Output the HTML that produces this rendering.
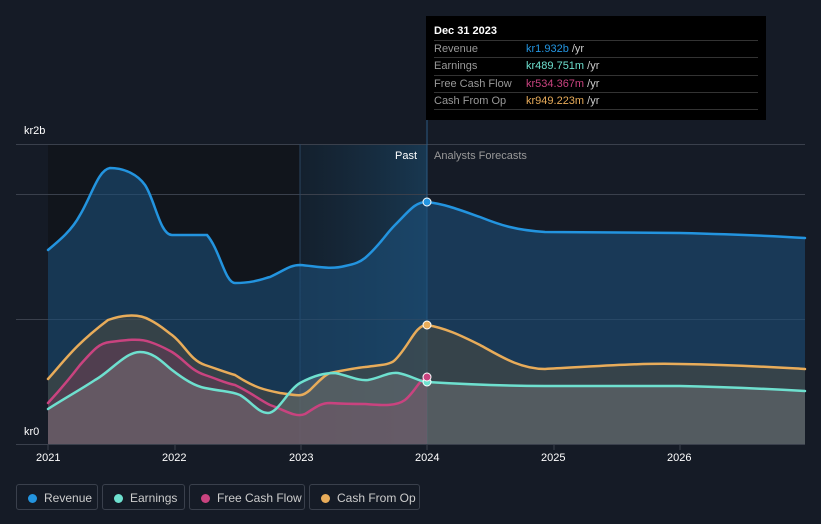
<!DOCTYPE html><html><head><style>
body{margin:0;width:821px;height:524px;background:#151b26;font-family:"Liberation Sans",sans-serif;overflow:hidden;position:relative}
.tt{position:absolute;left:426px;top:16px;width:340px;height:104px;background:#000;color:#fff;font-size:11px}
.tt .d{position:absolute;left:8px;top:9px;font-weight:bold}
.row{position:absolute;left:8px;width:324px;height:17px;border-top:1px solid #333;line-height:17px;color:#999}
.row span{position:absolute;left:92px}
.leg{position:absolute;top:484px;height:26px;border:1px solid #3a404c;border-radius:3px;color:#ccc;font-size:12px;line-height:26px;box-sizing:border-box;padding-left:27px}
.leg i{position:absolute;left:11px;top:9px;width:9px;height:9px;border-radius:50%}
.ax{position:absolute;color:#fff;font-size:11px}
</style></head><body>
<svg width="821" height="524" style="position:absolute;left:0;top:0">
<defs>
<linearGradient id="hb" x1="0" x2="1"><stop offset="0" stop-color="#1b3a56" stop-opacity="0.3"/><stop offset="1" stop-color="#1f5a85" stop-opacity="0.5"/></linearGradient>
</defs>
<rect x="48" y="144" width="379" height="300" fill="#11151c"/>
<rect x="300" y="144" width="127" height="300" fill="url(#hb)"/>
<g stroke="#3a404c" stroke-width="1"><line x1="16" y1="144.5" x2="805" y2="144.5"/><line x1="16" y1="194.5" x2="805" y2="194.5"/><line x1="16" y1="319.5" x2="805" y2="319.5"/><line x1="16" y1="444.5" x2="805" y2="444.5"/></g>
<line x1="427" y1="16" x2="427" y2="444" stroke="#2a5a82"/>
<line x1="300" y1="144" x2="300" y2="444" stroke="#2a4560"/>
<path d="M48,250 C60,240 72,230 80,215 C92,195 98,170 110,168 C125,168 138,175 145,185 C155,200 160,235 172,235 L207,235 C220,250 225,283 235,283 C255,283 265,278 270,277 C285,270 290,265 300,265 C315,266 330,270 345,266 C355,264 360,262 365,258 C380,245 385,235 395,225 C410,210 415,202 427,202 C445,204 460,210 480,217 C500,225 515,230 545,232 L680,233 C720,234 760,235 805,238 L805,444 L48,444Z" fill="#1c4e78" fill-opacity="0.6"/>
<path d="M48,379 C65,360 75,345 108,320 C125,314 140,314 150,320 C160,325 165,330 172,335 C185,345 190,360 205,365 C220,370 225,372 235,375 C255,388 265,390 280,393 C300,396 302,397 310,390 C320,380 325,375 330,373 C345,370 355,368 365,367 C380,365 390,365 395,360 C410,345 415,325 427,325 C445,328 460,335 480,345 C500,356 520,369 545,369 C600,366 640,363 680,364 C740,365 770,367 805,369 L805,444 L48,444Z" fill="#5a4f3c" fill-opacity="0.45"/>
<path d="M48,403 C60,390 70,378 80,365 C95,348 100,343 110,342 C125,340 140,338 150,342 C162,346 168,350 172,352 C185,360 190,370 205,375 C220,380 225,383 235,385 C250,392 260,400 270,405 C285,410 295,418 305,414 C315,408 320,403 330,403 C345,404 355,404 365,404 C380,405 395,407 405,400 C415,392 420,378 427,378 L427,444 L48,444Z" fill="#7a3a5a" fill-opacity="0.4"/>
<path d="M48,409 C65,398 80,390 95,380 C110,372 125,352 140,352 C155,352 165,365 172,370 C185,380 195,386 205,388 C225,392 230,391 240,395 C252,402 258,413 268,413 C278,413 288,390 300,383 C315,375 325,373 335,373 C350,376 358,381 368,380 C380,378 388,372 398,373 C410,375 420,382 427,382 C460,384 500,386 545,386 L680,386 C730,387 770,389 805,391 L805,444 L48,444Z" fill="#8a8a8a" fill-opacity="0.35"/>
<g fill="none" stroke-width="2.5" stroke-linecap="round">
<path d="M48,250 C60,240 72,230 80,215 C92,195 98,170 110,168 C125,168 138,175 145,185 C155,200 160,235 172,235 L207,235 C220,250 225,283 235,283 C255,283 265,278 270,277 C285,270 290,265 300,265 C315,266 330,270 345,266 C355,264 360,262 365,258 C380,245 385,235 395,225 C410,210 415,202 427,202 C445,204 460,210 480,217 C500,225 515,230 545,232 L680,233 C720,234 760,235 805,238" stroke="#2394df"/>
<path d="M48,379 C65,360 75,345 108,320 C125,314 140,314 150,320 C160,325 165,330 172,335 C185,345 190,360 205,365 C220,370 225,372 235,375 C255,388 265,390 280,393 C300,396 302,397 310,390 C320,380 325,375 330,373 C345,370 355,368 365,367 C380,365 390,365 395,360 C410,345 415,325 427,325 C445,328 460,335 480,345 C500,356 520,369 545,369 C600,366 640,363 680,364 C740,365 770,367 805,369" stroke="#e8ac5a"/>
<path d="M48,403 C60,390 70,378 80,365 C95,348 100,343 110,342 C125,340 140,338 150,342 C162,346 168,350 172,352 C185,360 190,370 205,375 C220,380 225,383 235,385 C250,392 260,400 270,405 C285,410 295,418 305,414 C315,408 320,403 330,403 C345,404 355,404 365,404 C380,405 395,407 405,400 C415,392 420,378 427,378" stroke="#c9437f"/>
<path d="M48,409 C65,398 80,390 95,380 C110,372 125,352 140,352 C155,352 165,365 172,370 C185,380 195,386 205,388 C225,392 230,391 240,395 C252,402 258,413 268,413 C278,413 288,390 300,383 C315,375 325,373 335,373 C350,376 358,381 368,380 C380,378 388,372 398,373 C410,375 420,382 427,382 C460,384 500,386 545,386 L680,386 C730,387 770,389 805,391" stroke="#6ee0cf"/>
</g>
<g stroke="#fff" stroke-width="1"><circle cx="427" cy="202" r="4" fill="#2394df"/><circle cx="427" cy="325" r="4" fill="#e8ac5a"/><circle cx="427" cy="382" r="4" fill="#6ee0cf"/><circle cx="427" cy="377" r="4" fill="#c9437f"/></g>
<g stroke="#3a404c"><line x1="48" y1="444" x2="48" y2="450"/><line x1="175" y1="444" x2="175" y2="450"/><line x1="301" y1="444" x2="301" y2="450"/><line x1="427" y1="444" x2="427" y2="450"/><line x1="554" y1="444" x2="554" y2="450"/><line x1="680" y1="444" x2="680" y2="450"/></g>
</svg>
<div class="ax" style="left:24px;top:125px">kr2b</div>
<div class="ax" style="left:24px;top:426px">kr0</div>
<div class="ax" style="left:395px;top:150px">Past</div>
<div class="ax" style="left:434px;top:150px;color:#999">Analysts Forecasts</div>
<div class="ax" style="left:36px;top:452px">2021</div>
<div class="ax" style="left:162px;top:452px">2022</div>
<div class="ax" style="left:289px;top:452px">2023</div>
<div class="ax" style="left:415px;top:452px">2024</div>
<div class="ax" style="left:541px;top:452px">2025</div>
<div class="ax" style="left:667px;top:452px">2026</div>
<div class="tt"><div class="d">Dec 31 2023</div>
<div class="row" style="top:24px">Revenue<span style="color:#2394df">kr1.932b <b style="color:#ccc;font-weight:normal">/yr</b></span></div>
<div class="row" style="top:41px">Earnings<span style="color:#6ee0cf">kr489.751m <b style="color:#ccc;font-weight:normal">/yr</b></span></div>
<div class="row" style="top:59px">Free Cash Flow<span style="color:#c9437f">kr534.367m <b style="color:#ccc;font-weight:normal">/yr</b></span></div>
<div class="row" style="top:76px">Cash From Op<span style="color:#e8ac5a">kr949.223m <b style="color:#ccc;font-weight:normal">/yr</b></span></div>
<div class="row" style="top:93px;height:0"></div>
</div>
<div class="leg" style="left:16px;width:82px"><i style="background:#2394df"></i>Revenue</div>
<div class="leg" style="left:102px;width:83px"><i style="background:#6ee0cf"></i>Earnings</div>
<div class="leg" style="left:189px;width:116px"><i style="background:#c9437f"></i>Free Cash Flow</div>
<div class="leg" style="left:309px;width:111px"><i style="background:#e8ac5a"></i>Cash From Op</div>
</body></html>
